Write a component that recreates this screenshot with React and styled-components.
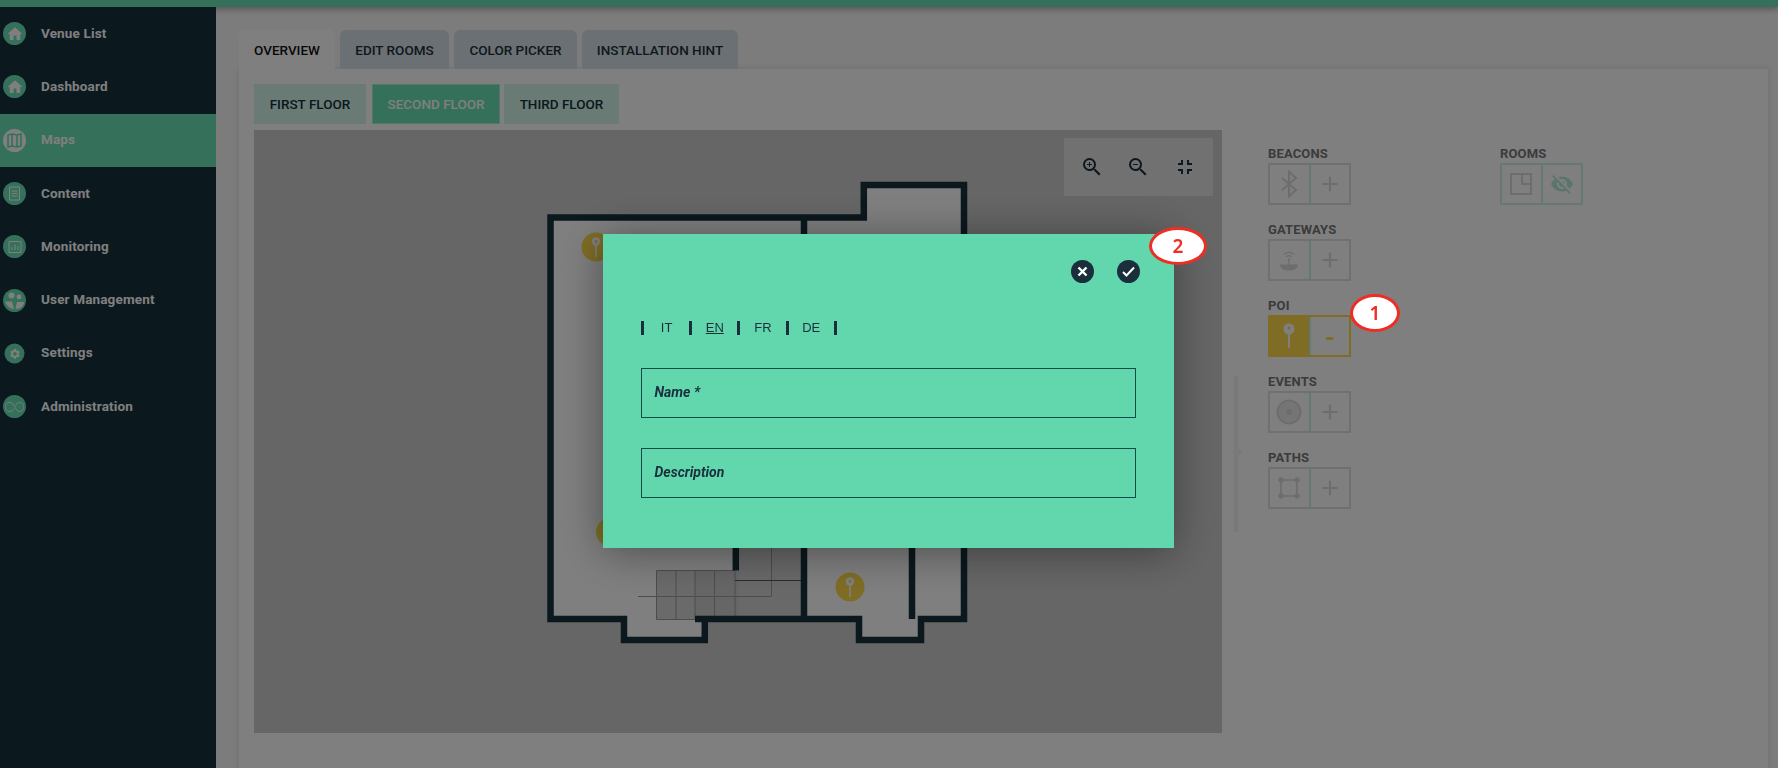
import React from "react";
import styled, { createGlobalStyle } from "styled-components";
import {
  MdHome,
  MdSettings,
  MdZoomIn,
  MdZoomOut,
  MdFullscreenExit,
  MdAdd,
  MdVisibilityOff
} from "react-icons/md";

const GlobalStyle = createGlobalStyle`
  html, body {
    margin: 0;
    padding: 0;
    height: 100%;
    overflow: hidden;
    background: #f8f8f8;
    font-family: Roboto, "Liberation Sans", sans-serif;
  }
  * { box-sizing: border-box; }
`;

const Page = styled.div`
  width: 1778px;
  height: 768px;
  display: flex;
  flex-direction: column;
  overflow: hidden;
`;

const TopBar = styled.div`
  height: 7px;
  flex: none;
  background: #6ae0b4;
  box-shadow: 0 2px 6px rgba(0, 0, 0, 0.35);
`;

const Body = styled.div`
  flex: 1;
  display: flex;
  min-height: 0;
`;

const Sidebar = styled.nav`
  width: 216px;
  flex: none;
  background: #16303b;
`;

const NavItem = styled.div`
  height: 53.3px;
  display: flex;
  align-items: center;
  padding-left: 3px;
  gap: 15px;
  color: #fff;
  font-size: 13.5px;
  font-weight: 700;
  letter-spacing: 0.15px;
  background: ${(p) => (p.$active ? "#6ae0b4" : "transparent")};
`;

const NavLabel = styled.span`
  margin-top: -2px;
`;

const NavIcon = styled.span`
  width: 23px;
  height: 23px;
  border-radius: 50%;
  flex: none;
  display: flex;
  align-items: center;
  justify-content: center;
  color: ${(p) => (p.$active ? "#6ae0b4" : "#fff")};
  background: ${(p) => (p.$active ? "#fff" : "#6ae0b4")};
  transform: scale(${(p) => p.$scale || 1});
`;

const Main = styled.main`
  flex: 1;
  padding: 23px 10px 0 23px;
  min-width: 0;
`;

const Tabs = styled.div`
  display: flex;
  gap: 5px;
  height: 39px;
`;

const Tab = styled.div`
  width: ${(p) => p.$w}px;
  display: flex;
  align-items: center;
  justify-content: center;
  border-radius: 6px 6px 0 0;
  font-size: 13.5px;
  font-weight: 500;
  color: ${(p) => (p.$active ? "#111" : "#1f3039")};
  background: ${(p) => (p.$active ? "#fff" : "#d4e0e6")};
`;

const Panel = styled.section`
  background: #fff;
  padding: 15px 15px 0;
  height: 700px;
  box-shadow: 0 0 6px rgba(0, 0, 0, 0.12);
`;

const Floors = styled.div`
  display: flex;
  gap: 5px;
  height: 40px;
  margin-bottom: 6px;
`;

const Floor = styled.div`
  width: ${(p) => p.$w}px;
  margin: ${(p) => (p.$active ? "0 -1px 0 1px" : "0")};
  display: flex;
  align-items: center;
  justify-content: center;
  font-size: 13.5px;
  font-weight: 500;
  color: ${(p) => (p.$active ? "#fff" : "#16303b")};
  background: ${(p) => (p.$active ? "#6ae0b4" : "#d5f5ea")};
  border: 1px solid ${(p) => (p.$active ? "#a8eed4" : "#d5f5ea")};
`;

const Workspace = styled.div`
  display: flex;
`;

const MapArea = styled.div`
  position: relative;
  width: 968px;
  height: 603px;
  flex: none;
  background: #cccccc;
`;

const Plan = styled.svg`
  display: block;
  width: 968px;
  height: 603px;
`;

const ZoomBox = styled.div`
  position: absolute;
  top: 8px;
  right: 9px;
  width: 149px;
  height: 58px;
  background: #e2e2e2;
  display: flex;
  align-items: center;
  justify-content: space-around;
  padding: 0 5px;
  color: #16303b;
  font-size: 24px;
`;

const Splitter = styled.div`
  position: relative;
  width: 4px;
  height: 156px;
  flex: none;
  margin: 246px 0 0 12px;
  background: #f3f3f3;
  &::after {
    content: "";
    position: absolute;
    top: 73px;
    left: 0;
    width: 7px;
    height: 7px;
    background: #f3f3f3;
    transform: rotate(45deg);
  }
`;

const Tools = styled.div`
  display: flex;
  gap: 50px;
  padding: 14px 0 0 30px;
`;

const ToolColumn = styled.div`
  width: 182px;
`;

const ToolGroup = styled.div`
  height: 76px;
`;

const ToolLabel = styled.div`
  height: 19px;
  font-size: 13px;
  letter-spacing: 0.15px;
  font-weight: 700;
  line-height: 19px;
  color: #777;
`;

const ToolBox = styled.div`
  width: 83px;
  height: 42px;
  display: flex;
  border: 2px solid ${(p) => p.$color};
`;

const ToolCell = styled.div`
  flex: 1;
  display: flex;
  align-items: center;
  justify-content: center;
  font-size: ${(p) => p.$size || 22}px;
  font-weight: 700;
  color: ${(p) => p.$color || "#dadada"};
  background: ${(p) => p.$fill || "transparent"};
  & + & {
    border-left: 2px solid ${(p) => p.$line || "#e0e0e0"};
  }
`;

const Minus = styled.span`
  margin-top: 4px;
`;

const Overlay = styled.div`
  position: fixed;
  inset: 0;
  background: rgba(0, 0, 0, 0.5);
  display: flex;
  align-items: center;
  justify-content: center;
  padding: 14px 1px 0 0;
`;

const Modal = styled.div`
  width: 571px;
  height: 314px;
  background: #62d7ad;
  box-shadow: 0 4px 40px rgba(0, 0, 0, 0.4);
  padding: 26px 34px 0 38px;
`;

const ModalActions = styled.div`
  display: flex;
  justify-content: flex-end;
  gap: 23px;
  height: 60px;
`;

const RoundButton = styled.span`
  width: 23px;
  height: 23px;
  border-radius: 50%;
  background: #1a2f3b;
  color: #fff;
  display: flex;
  align-items: center;
  justify-content: center;
`;

const Languages = styled.div`
  display: flex;
  align-items: center;
  height: 14px;
  margin: 0 0 34px;
  border-left: 3px solid #1a2f3b;
  width: fit-content;
  position: relative;
  top: 0.5px;
`;

const Language = styled.span`
  width: 48.2px;
  height: 14px;
  line-height: 14px;
  text-align: center;
  border-right: 3px solid #1a2f3b;
  font-family: "Liberation Sans", Arial, sans-serif;
  font-size: 13px;
  color: #1a2f3b;
  text-decoration: ${(p) => (p.$active ? "underline" : "none")};
`;

const Field = styled.div`
  width: 495px;
  height: 50px;
  border: 1px solid #0d4f47;
  padding: 14px 12.5px 0;
  margin-bottom: 30px;
  font-size: 14px;
  font-weight: 700;
  font-style: italic;
  line-height: 18px;
  color: #1a2f3b;
`;

const Callout = styled.div`
  position: fixed;
  left: ${(p) => p.$x}px;
  top: ${(p) => p.$y}px;
  width: ${(p) => p.$w}px;
  height: 38px;
  border-radius: 50%;
  background: #fff;
  border: 3px solid #ee2e24;
  color: #ee2e24;
  display: flex;
  align-items: center;
  justify-content: center;
  font-family: "Noto Sans", sans-serif;
  font-size: 19px;
  font-weight: 600;
`;

const MapGlyph = () => (
  <svg width="17" height="17" viewBox="0 0 17 17" fill="none" stroke="currentColor" strokeWidth="1.6">
    <path d="M2 3l4-1 5 1 4-1v12l-4 1-5-1-4 1zM6 2v12M11 3v12" />
  </svg>
);

const DocGlyph = () => (
  <svg width="13" height="15" viewBox="0 0 13 15" fill="none" stroke="currentColor" strokeWidth="1">
    <path d="M1.500 1h10v13h-10zM3.500 5h6M3.500 7.500h6M3.500 10h6" />
  </svg>
);

const ChartGlyph = () => (
  <svg width="14" height="14" viewBox="0 0 14 14" fill="none" stroke="currentColor" strokeWidth="1">
    <path d="M1 1.500h12v11H1zM4 10V7M7 10V4.500M10 10V6" />
  </svg>
);

const UsersGlyph = () => (
  <svg width="21" height="19" viewBox="0 0 21 19" fill="currentColor">
    <circle cx="7.500" cy="4.500" r="3" />
    <circle cx="15" cy="6" r="2.400" />
    <path d="M1 10.500h7l2 7.500c-4.500-.5-7.500-3-9-7.500zM11.500 18l1.500-7h7c0 3.500-3 7-8.500 7z" />
  </svg>
);

const LinkGlyph = () => (
  <svg width="19" height="12" viewBox="0 0 19 12" fill="none" stroke="currentColor" strokeWidth="0.9">
    <path d="M9 7.500c-1 2-2.500 3.200-4.300 3.200a4.700 4.700 0 0 1 0-9.400c2.800 0 4.300 3.200 5.600 5.400 1 1.800 2.200 3.800 4.200 3.800a4.500 4.500 0 0 0 0-9c-1.800 0-3 1.200-4 2.800" />
  </svg>
);

const BluetoothGlyph = () => (
  <svg width="18" height="28" viewBox="0 0 18 28" fill="none" stroke="#dadada" strokeWidth="2">
    <path d="M2 8l14 12-7 6.500V1.500l7 6.500L2 20" />
  </svg>
);

const SatelliteGlyph = () => (
  <svg width="20" height="24" viewBox="0 0 20 24" fill="none" stroke="#dadada" strokeWidth="1.300">
    <path d="M5 6.500a7 7 0 0 1 10 0M7.300 9a4 4 0 0 1 5.400 0" />
    <circle cx="10" cy="11.500" r="1.300" fill="#dadada" stroke="none" />
    <path d="M10 12v5" />
    <path d="M1 16.500h18c0 4-4 6-9 6s-9-2-9-6z" fill="#dadada" stroke="none" />
  </svg>
);

const PinGlyph = () => (
  <svg width="14" height="26" viewBox="0 0 14 26" fill="#fff">
    <circle cx="7" cy="6" r="5.500" />
    <circle cx="7" cy="5" r="1.500" fill="#ffda4c" />
    <rect x="6" y="10" width="2" height="15" rx="1" />
  </svg>
);

const EventGlyph = () => (
  <svg width="26" height="26" viewBox="0 0 26 26">
    <circle cx="13" cy="13" r="11.500" fill="#eaeaea" stroke="#dadada" strokeWidth="2" />
    <circle cx="13" cy="13" r="3" fill="#dadada" />
  </svg>
);

const PathGlyph = () => (
  <svg width="24" height="24" viewBox="0 0 24 24" fill="#dadada" stroke="#dadada">
    <path d="M4 4h16v16H4z" fill="none" strokeWidth="1.600" />
    <circle cx="4" cy="4" r="2.300" />
    <circle cx="20" cy="4" r="2.300" />
    <circle cx="4" cy="20" r="2.300" />
    <circle cx="20" cy="20" r="2.300" />
  </svg>
);

const RoomsGlyph = () => (
  <svg width="24" height="24" viewBox="0 0 24 24" fill="none" stroke="#dadada" strokeWidth="2">
    <path d="M2 2h20v20H2zM13 2v10h9" />
  </svg>
);

const CloseGlyph = () => (
  <svg width="11" height="11" viewBox="0 0 11 11" fill="none" stroke="currentColor" strokeWidth="2.400">
    <path d="M1.500 1.500l8 8M9.500 1.500l-8 8" />
  </svg>
);

const CheckGlyph = () => (
  <svg width="13" height="11" viewBox="0 0 13 11" fill="none" stroke="currentColor" strokeWidth="2">
    <path d="M1 6l3.500 3.500L12 1.500" />
  </svg>
);

const MapPin = ({ x, y }) => (
  <g transform={`translate(${x} ${y})`}>
    <circle r="14.500" fill="#ffda4c" />
    <circle cy="-5.500" r="4.200" fill="#fff" />
    <circle cy="-5.500" r="1.400" fill="#ffda4c" />
    <rect x="-0.800" y="-3" width="1.600" height="13" fill="#fff" />
  </g>
);

const navItems = [
  { label: "Venue List", icon: <MdHome size={18} /> },
  { label: "Dashboard", icon: <MdHome size={18} /> },
  { label: "Maps", icon: <MapGlyph />, active: true },
  { label: "Content", icon: <DocGlyph /> },
  { label: "Monitoring", icon: <ChartGlyph /> },
  { label: "User Management", icon: <UsersGlyph /> },
  { label: "Settings", icon: <MdSettings size={14} />, scale: 0.87 },
  { label: "Administration", icon: <LinkGlyph /> }
];

const tabs = [
  { label: "OVERVIEW", w: 96, active: true },
  { label: "EDIT ROOMS", w: 109 },
  { label: "COLOR PICKER", w: 123 },
  { label: "INSTALLATION HINT", w: 156 }
];

const floors = [
  { label: "FIRST FLOOR", w: 112 },
  { label: "SECOND FLOOR", w: 128, active: true },
  { label: "THIRD FLOOR", w: 115 }
];

function FloorPlan() {
  return (
    <Plan viewBox="254 130 968 603">
      <path
        d="M550 217H863.500V185H964V618.500H921V640H859V619H704.500V640H624V619H550Z"
        fill="#fff"
      />
      <path d="M739 548H801V616H739Z" fill="#d2d2d2" />
      <rect x="656.500" y="570.500" width="38.500" height="49" fill="#000" fillOpacity="0.17" />
      <rect x="695" y="570.500" width="44" height="46" fill="#000" fillOpacity="0.2" />
      <g fill="none" stroke="#9a9a9a" strokeWidth="1">
        <path d="M656.500 570.500H735M656.500 570.500V619.500H695V570.500" />
        <path d="M676 570.500V619M714.500 570.500V616M735 570.500V616" />
        <path d="M638 596.500H771.500V548" />
      </g>
      <path d="M735 580.500H801" fill="none" stroke="#4a5a60" strokeWidth="1" />
      <g fill="none" stroke="#16303b" strokeWidth="6.500">
        <path d="M695 619H859V640H921V619H964V185H863.800V217.500H550.500V619H624V640H704.800V616" />
        <path d="M804 217V616M735.800 500V570.500M912 400V619" />
      </g>
      <MapPin x={596} y={247} />
      <MapPin x={610.500} y={532} />
      <MapPin x={850} y={587} />
    </Plan>
  );
}

function ToolRow({ label, color = "#e0e0e0", children }) {
  return (
    <ToolGroup>
      <ToolLabel>{label}</ToolLabel>
      <ToolBox $color={color}>{children}</ToolBox>
    </ToolGroup>
  );
}

export default function App() {
  return (
    <>
      <GlobalStyle />
      <Page>
        <TopBar />
        <Body>
          <Sidebar>
            {navItems.map((item) => (
              <NavItem key={item.label} $active={item.active}>
                <NavIcon $active={item.active} $scale={item.scale}>
                  {item.icon}
                </NavIcon>
                <NavLabel>{item.label}</NavLabel>
              </NavItem>
            ))}
          </Sidebar>
          <Main>
            <Tabs>
              {tabs.map((tab) => (
                <Tab key={tab.label} $w={tab.w} $active={tab.active}>
                  {tab.label}
                </Tab>
              ))}
            </Tabs>
            <Panel>
              <Floors>
                {floors.map((floor) => (
                  <Floor key={floor.label} $w={floor.w} $active={floor.active}>
                    {floor.label}
                  </Floor>
                ))}
              </Floors>
              <Workspace>
                <MapArea>
                  <FloorPlan />
                  <ZoomBox>
                    <MdZoomIn />
                    <MdZoomOut />
                    <MdFullscreenExit />
                  </ZoomBox>
                </MapArea>
                <Splitter />
                <Tools>
                  <ToolColumn>
                    <ToolRow label="BEACONS">
                      <ToolCell><BluetoothGlyph /></ToolCell>
                      <ToolCell $size={26}><MdAdd /></ToolCell>
                    </ToolRow>
                    <ToolRow label="GATEWAYS">
                      <ToolCell><SatelliteGlyph /></ToolCell>
                      <ToolCell $size={26}><MdAdd /></ToolCell>
                    </ToolRow>
                    <ToolRow label="POI" color="#ffda4c">
                      <ToolCell $fill="#ffda4c"><PinGlyph /></ToolCell>
                      <ToolCell $line="#ffda4c" $color="#ffda4c" $size={26}><Minus>-</Minus></ToolCell>
                    </ToolRow>
                    <ToolRow label="EVENTS">
                      <ToolCell><EventGlyph /></ToolCell>
                      <ToolCell $size={26}><MdAdd /></ToolCell>
                    </ToolRow>
                    <ToolRow label="PATHS">
                      <ToolCell><PathGlyph /></ToolCell>
                      <ToolCell $size={26}><MdAdd /></ToolCell>
                    </ToolRow>
                  </ToolColumn>
                  <ToolColumn>
                    <ToolRow label="ROOMS" color="#c8f2e2">
                      <ToolCell $line="#c8f2e2"><RoomsGlyph /></ToolCell>
                      <ToolCell $line="#c8f2e2" $color="#b4ecd8" $size={24}><MdVisibilityOff /></ToolCell>
                    </ToolRow>
                  </ToolColumn>
                </Tools>
              </Workspace>
            </Panel>
          </Main>
        </Body>
      </Page>
      <Overlay>
        <Modal>
          <ModalActions>
            <RoundButton><CloseGlyph /></RoundButton>
            <RoundButton><CheckGlyph /></RoundButton>
          </ModalActions>
          <Languages>
            <Language>IT</Language>
            <Language $active>EN</Language>
            <Language>FR</Language>
            <Language>DE</Language>
          </Languages>
          <Field>Name *</Field>
          <Field>Description</Field>
        </Modal>
      </Overlay>
      <Callout $x={1149} $y={227} $w={58}>2</Callout>
      <Callout $x={1350} $y={294} $w={50}>1</Callout>
    </>
  );
}
